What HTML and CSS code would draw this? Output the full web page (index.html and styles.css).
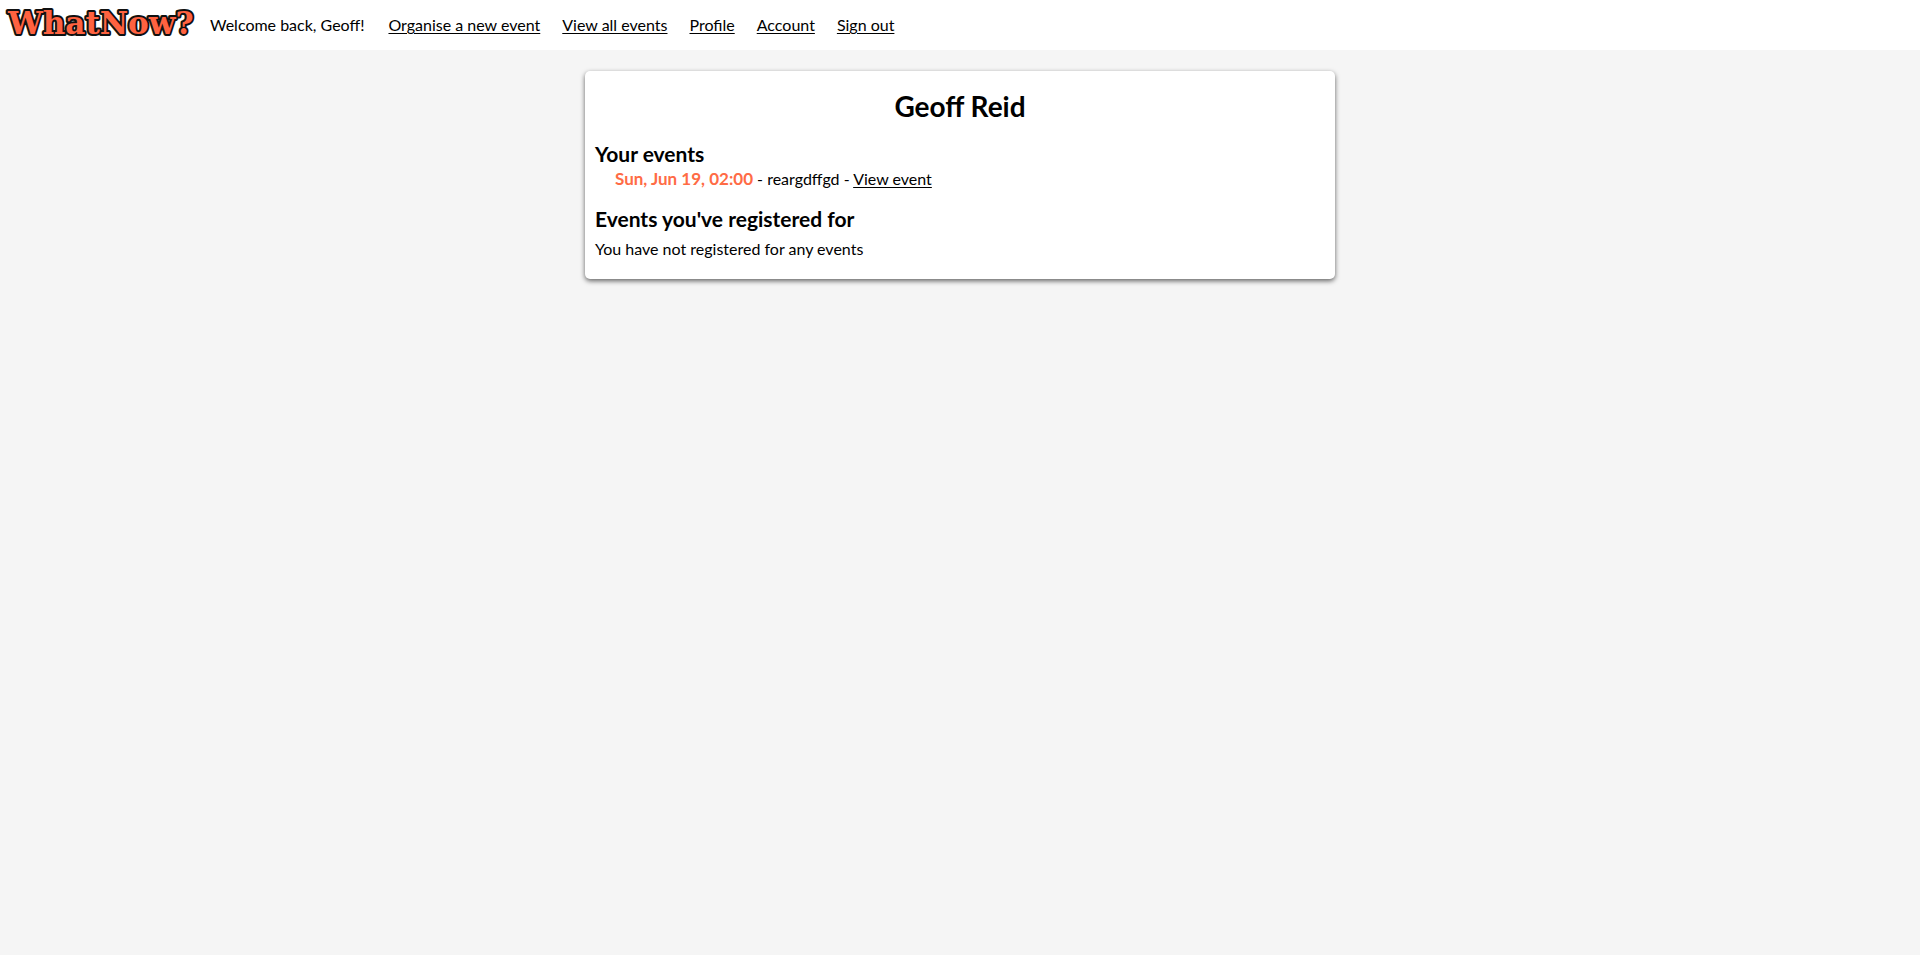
FILE: index.html
```html
<!DOCTYPE html>
<html lang="en">
<head>
  <meta charset="utf-8">
  <meta name="viewport" content="width=device-width, initial-scale=1">
  <title>WhatNow?</title>
  <link rel="stylesheet" href="styles.css">
</head>
<body>
  <header class="navbar">
    <a class="logo" href="#" aria-label="WhatNow? home">
      <svg width="200" height="50" viewBox="0 0 200 50">
        <text class="logo-text" x="8" y="34">WhatNow?</text>
      </svg>
    </a>
    <span class="welcome">Welcome back, Geoff!</span>
    <nav class="links">
      <a href="#">Organise a new event</a>
      <a href="#">View all events</a>
      <a href="#">Profile</a>
      <a href="#">Account</a>
      <a href="#">Sign out</a>
    </nav>
  </header>
  <main class="card">
    <h1>Geoff Reid</h1>
    <section>
      <h2>Your events</h2>
      <ul class="events">
        <li><span class="date">Sun, Jun 19, 02:00</span> - reargdffgd - <a href="#">View event</a></li>
      </ul>
    </section>
    <section>
      <h2>Events you've registered for</h2>
      <p class="empty">You have not registered for any events</p>
    </section>
  </main>
</body>
</html>
```
FILE: styles.css
```css
* { box-sizing: border-box; }
body {
  display: flow-root;
  min-height: 100vh;
  margin: 0;
  background: #f5f5f5;
  color: #000;
  font: 16px/20px "Trebuchet MS", Lato, sans-serif;
}
a { color: inherit; text-underline-offset: 2px; }
.navbar {
  display: flex;
  align-items: center;
  min-height: 50px;
  background: #fff;
}
.logo { display: flex; margin-right: 10px; }
.logo-text {
  font: bold 31px "DejaVu Serif", serif;
  fill: #ff6240;
  stroke: #111;
  stroke-width: 4px;
  stroke-linejoin: round;
  paint-order: stroke;
}
.welcome { margin-right: 24px; }
.links { display: flex; gap: 22px; }
.card {
  max-width: 750px;
  margin: 21px auto 0;
  padding: 20px 10px;
  background: #fff;
  border-radius: 5px;
  box-shadow: 0 2px 5px rgba(0, 0, 0, 0.6);
}
h1 { margin: 0 0 21px; font-size: 28px; line-height: 30px; text-align: center; }
h2 { margin: 0; font-size: 21px; line-height: 24px; }
.events { margin: 0 0 15px; padding: 0 0 0 20px; list-style: none; line-height: 26px; }
.date { color: #ff6b45; font-size: 17px; font-weight: bold; }
.empty { margin: 8px 0 0; }
```
